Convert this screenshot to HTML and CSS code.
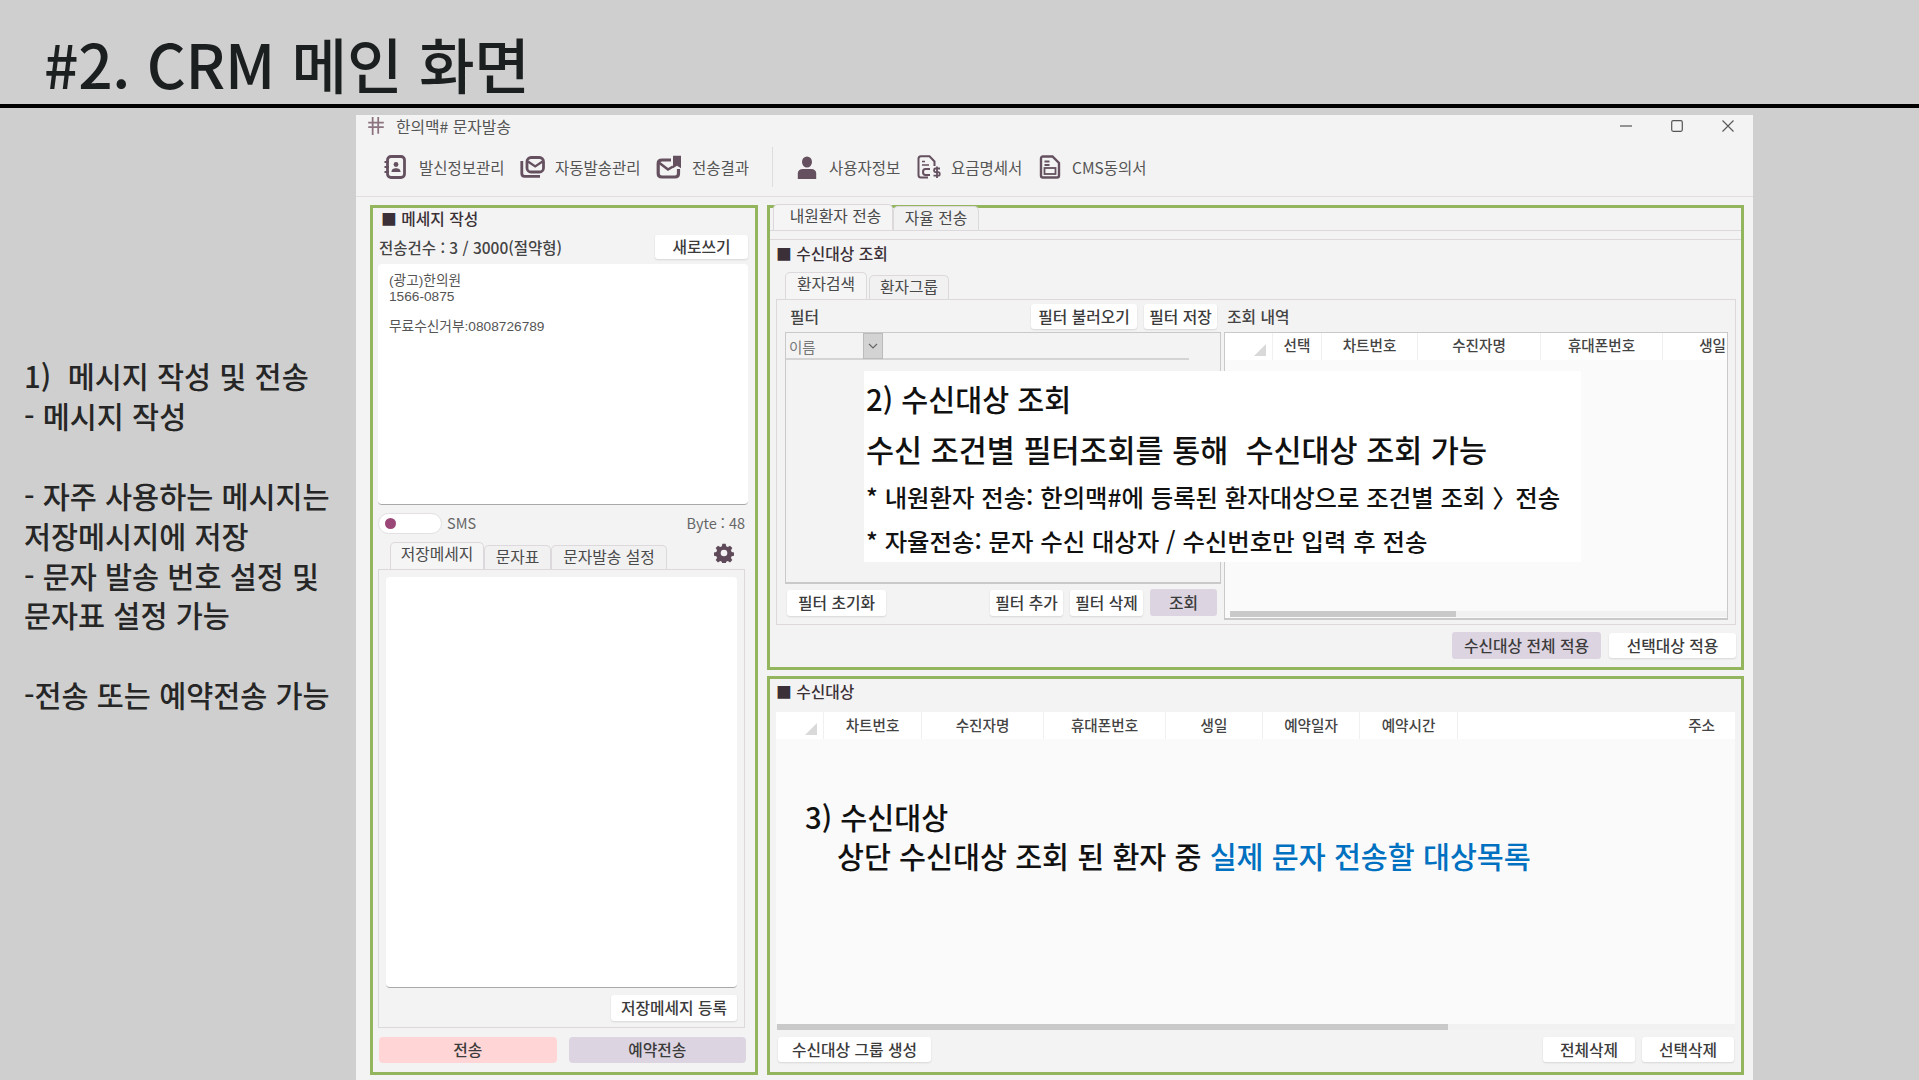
FILE: index.html
```html
<!DOCTYPE html>
<html lang="ko">
<head>
<meta charset="utf-8">
<title>CRM 메인 화면</title>
<link rel="stylesheet" href="styles.css">
</head>
<body>
<header class="slide-head"><h1>#2. CRM 메인 화면</h1></header>
<main class="slide-body">
  <aside class="notes">
    <p>1)&nbsp; 메시지 작성 및 전송</p>
    <p>- 메시지 작성</p>
    <p>&nbsp;</p>
    <p>- 자주 사용하는 메시지는</p>
    <p>저장메시지에 저장</p>
    <p>- 문자 발송 번호 설정 및</p>
    <p>문자표 설정 가능</p>
    <p>&nbsp;</p>
    <p>-전송 또는 예약전송 가능</p>
  </aside>
  <section class="window">
    <div class="titlebar">
      <svg class="app-icon" viewBox="0 0 16 18"><path d="M5 1v16M10 1v15M1 6h14M1 10h14" fill="none" stroke="#8b7480" stroke-width="1.6"/></svg>
      <span class="app-name">한의맥# 문자발송</span>
      <div class="win-controls">
        <svg viewBox="0 0 12 12"><path d="M0 6h12" stroke="#555" stroke-width="1.2"/></svg>
        <svg viewBox="0 0 12 12"><rect x=".7" y=".7" width="10.6" height="10.6" rx="1.5" fill="none" stroke="#555" stroke-width="1.2"/></svg>
        <svg viewBox="0 0 12 12"><path d="M.5.5l11 11M11.5.5l-11 11" stroke="#555" stroke-width="1.1"/></svg>
      </div>
    </div>
    <div class="toolbar">
      <div class="tool t1">
        <svg class="i22" viewBox="0 0 22 24"><rect x="3.500" y="1.500" width="17" height="21" rx="3.500" fill="none" stroke="#65505f" stroke-width="2.800"/><path d="M.5 7h4.500M.5 12h4.500M.5 17h4.500" stroke="#65505f" stroke-width="2"/><circle cx="12" cy="9.500" r="2.400" fill="#65505f"/><path d="M7.500 17c0-3 2-3.800 4.500-3.800s4.500.8 4.500 3.800z" fill="#65505f"/></svg>
        <span>발신정보관리</span>
      </div>
      <div class="tool t2">
        <svg class="i25" viewBox="0 0 25 22"><path d="M1.800 5v12.500c0 1.800 1 2.800 2.800 2.800H20" fill="none" stroke="#65505f" stroke-width="2.800"/><rect x="7" y="1.500" width="16.500" height="14.500" rx="4" fill="none" stroke="#65505f" stroke-width="2.800"/><path d="M8 5.500l7.200 5 7.300-5" fill="none" stroke="#65505f" stroke-width="2.200"/></svg>
        <span>자동발송관리</span>
      </div>
      <div class="tool t3">
        <svg class="i27" viewBox="0 0 27 24"><path d="M15 5H6C3.500 5 2.200 6.300 2.200 8.500v10c0 2.200 1.300 3.500 3.800 3.500h13c2.200 0 3.500-1.300 3.500-3.500V14" fill="none" stroke="#65505f" stroke-width="3.200"/><path d="M3.500 8l8.500 6.500 5-3" fill="none" stroke="#65505f" stroke-width="2.600"/><path d="M17 .8h8v12.500l-4-2.500-4 2.500z" fill="#65505f"/></svg>
        <span>전송결과</span>
      </div>
      <i class="tool-sep"></i>
      <div class="tool t4">
        <svg class="i20" viewBox="0 0 20 23"><ellipse cx="10" cy="6" rx="5" ry="5.500" fill="#65505f"/><path d="M.8 23v-5.500c0-3 2-4.500 5-4.500h8.400c3 0 5 1.500 5 4.500V23z" fill="#65505f"/></svg>
        <span>사용자정보</span>
      </div>
      <div class="tool t5">
        <svg class="i26" viewBox="0 0 26 24"><path d="M17.500 11V6.500L12.500 1.200H4C2.500 1.200 1.500 2.200 1.500 3.700V20c0 1.500 1 2.500 2.500 2.500h7" fill="none" stroke="#65505f" stroke-width="2"/><path d="M5 6.500h3M5 10h7" stroke="#65505f" stroke-width="1.700"/><path d="M13 14H8.500C6.800 14 6 15 6 17s.8 3 2.500 3H13" fill="none" stroke="#65505f" stroke-width="2"/><path d="M23 13.500h-4.500c-1.900 0-1.900 3.600 0 3.600h2.800c1.900 0 1.900 3.600 0 3.600h-4.800M20 11.500v11.500" fill="none" stroke="#65505f" stroke-width="1.800"/></svg>
        <span>요금명세서</span>
      </div>
      <div class="tool t6">
        <svg class="i22" viewBox="0 0 22 24"><path d="M13.500 1.500H4C2.700 1.500 2 2.200 2 3.500v17C2 21.800 2.700 22.500 4 22.500h14c1.300 0 2-.7 2-2V8z" fill="none" stroke="#65505f" stroke-width="2.400"/><path d="M5.500 6.500h5M5.500 10h5" stroke="#65505f" stroke-width="1.800"/><rect x="5.500" y="13" width="11" height="6" fill="none" stroke="#65505f" stroke-width="1.800"/></svg>
        <span>CMS동의서</span>
      </div>
    </div>
    <div class="workspace">
      <section class="panel compose">
        <h2 class="sec-title compose-title">■ 메세지 작성</h2>
        <div class="count-row"><strong>전송건수 : 3 / 3000(절약형)</strong><button class="btn new-btn">새로쓰기</button></div>
        <div class="msg-area"><p>(광고)한의원</p><p>1566-0875</p><p class="blank"></p><p>무료수신거부:0808726789</p></div>
        <div class="status-row"><span class="toggle"><i></i></span><span class="sms">SMS</span><span class="bytes">Byte : 48</span></div>
        <div class="tabs msg-tabs">
          <span class="tab active t-save">저장메세지</span><span class="tab t-table">문자표</span><span class="tab t-set">문자발송 설정</span>
          <svg class="gear" viewBox="0 0 24 24"><path fill="#5f4a59" fill-rule="evenodd" d="M10 1h4l.6 3 2 .9 2.600-1.600 2.800 2.800-1.700 2.500.9 2.100 3 .6v4l-3 .6-.9 2 1.700 2.600-2.800 2.800-2.600-1.700-2 .9-.6 3h-4l-.6-3-2-.9-2.600 1.700-2.800-2.800 1.700-2.600-.9-2-3-.6v-4l3-.6.9-2.100-1.700-2.500 2.800-2.800 2.600 1.600 2-.9zM12 8a4 4 0 1 0 0 8 4 4 0 0 0 0-8z"/></svg>
        </div>
        <div class="msg-pane">
          <div class="saved-list"></div>
          <div class="saved-actions"><button class="btn save-btn">저장메세지 등록</button></div>
        </div>
        <div class="send-row"><button class="btn wide pink">전송</button><button class="btn wide purple">예약전송</button></div>
      </section>
      <div class="right-col">
        <section class="panel lookup">
          <div class="tabs main-tabs"><span class="tab active m1">내원환자 전송</span><span class="tab m2">자율 전송</span></div>
          <div class="lookup-body">
            <h2 class="sec-title">■ 수신대상 조회</h2>
            <div class="tabs sub-tabs"><span class="tab active s1">환자검색</span><span class="tab s2">환자그룹</span></div>
            <div class="search-pane">
              <div class="filter-col">
                <div class="filter-head"><span class="label">필터</span><button class="btn f-load">필터 불러오기</button><button class="btn f-save">필터 저장</button></div>
                <div class="filter-box">
                  <div class="filter-select"><span class="sel-text">이름</span><span class="sel-btn"><svg viewBox="0 0 10 6"><path d="M1 1l4 4 4-4" fill="none" stroke="#666" stroke-width="1.200"/></svg></span></div>
                </div>
                <div class="filter-actions"><button class="btn f-reset">필터 초기화</button><span class="grow"></span><button class="btn f-add">필터 추가</button><button class="btn f-add">필터 삭제</button><button class="btn f-go purple">조회</button></div>
              </div>
              <div class="result-col">
                <div class="label result-label">조회 내역</div>
                <div class="result-box">
                  <div class="grid-head result-grid"><span class="corner"><i></i></span><span>선택</span><span>차트번호</span><span>수진자명</span><span>휴대폰번호</span><span class="clip">생일</span></div>
                  <div class="grid-body"></div>
                  <div class="hscroll r-scroll"><i></i></div>
                </div>
              </div>
            </div>
            <div class="apply-row"><button class="btn purple apply-all">수신대상 전체 적용</button><button class="btn apply-sel">선택대상 적용</button></div>
          </div>
          <div class="callout-white">
            <p class="c-big">2) 수신대상 조회</p>
            <p class="c-big c-wide">수신 조건별 필터조회를 통해&nbsp; 수신대상 조회 가능</p>
            <p class="c-small">* 내원환자 전송: 한의맥#에 등록된 환자대상으로 조건별 조회 <span class="chev">〉</span>전송</p>
            <p class="c-small">* 자율전송: 문자 수신 대상자 / 수신번호만 입력 후 전송</p>
          </div>
        </section>
        <section class="panel targets">
          <h2 class="sec-title">■ 수신대상</h2>
          <div class="grid-head target-grid"><span class="corner"><i></i></span><span>차트번호</span><span>수진자명</span><span>휴대폰번호</span><span>생일</span><span>예약일자</span><span>예약시간</span><span class="addr">주소</span></div>
          <div class="grid-body target-body">
            <div class="callout-plain">
              <p>3) 수신대상</p>
              <p class="indent">상단 수신대상 조회 된 환자 중 <b>실제 문자 전송할 대상목록</b></p>
            </div>
          </div>
          <div class="hscroll t-scroll"><i></i></div>
          <div class="target-actions"><button class="btn t-group">수신대상 그룹 생성</button><span class="grow"></span><button class="btn t-del">전체삭제</button><button class="btn t-del">선택삭제</button></div>
        </section>
      </div>
    </div>
  </section>
</main>
</body>
</html>
```
FILE: styles.css
```css
* { box-sizing: border-box; }
html, body { margin: 0; padding: 0; }
body {
  width: 1919px; height: 1080px; overflow: hidden;
  background: #cfcfcf; color: #3f3f3f;
  font-family: "Noto Sans CJK KR", "Noto Sans", sans-serif;
}
p, h1, h2 { margin: 0; font-weight: inherit; }
button { font-family: inherit; }

.slide-head { height: 108px; border-bottom: 4px solid #000; padding: 28px 0 0 44px; }
.slide-head h1 { font-size: 60.500px; line-height: 70px; font-weight: 500; color: #1c1f20; letter-spacing: -.3px; white-space: nowrap; }

.slide-body { display: flex; height: 972px; }
.notes { width: 356px; padding: 248px 0 0 24px; font-size: 29.400px; line-height: 39.900px; font-weight: 500; color: #262626; white-space: nowrap; }

.window { width: 1397px; height: 965px; margin-top: 7px; background: #f3f3f3; display: flex; flex-direction: column; }
.titlebar { height: 23px; display: flex; align-items: center; padding: 0 0 1px 11px; flex: none; }
.app-icon { width: 18px; height: 20px; }
.app-name { margin-left: 11px; font-size: 15.800px; color: #555; }
.win-controls { margin-left: auto; display: flex; gap: 39px; padding-right: 19px; }
.win-controls svg { width: 12px; height: 12px; display: block; }

.toolbar { height: 59px; flex: none; display: flex; align-items: center; border-bottom: 1px solid #e3dde2; }
.tool { display: flex; align-items: center; font-size: 15.500px; color: #555; white-space: nowrap; }
.tool span { margin-left: 11px; }
.tool svg { flex: none; display: block; }
.i22 { width: 22px; height: 24px; }
.i25 { width: 25px; height: 22px; }
.i27 { width: 27px; height: 24px; }
.i20 { width: 20px; height: 23px; }
.i26 { width: 26px; height: 24px; }
.t1 { margin-left: 28px; width: 136px; }
.t1 span { margin-left: 13px; }
.t2 { width: 136px; }
.t2 span { margin-left: 10px; }
.t3 { width: 116px; }
.t3 span { margin-left: 9px; }
.tool-sep { width: 1px; height: 40px; background: #ddd; flex: none; }
.t4 { margin-left: 24px; width: 120px; }
.t4 span { margin-left: 12px; }
.t5 { width: 122px; }
.t5 span { margin-left: 8px; }
.t6 { width: 120px; }

.workspace { flex: 1; min-height: 0; display: flex; gap: 9px; padding: 8px 9px 5px 14px; }
.panel { border: 3px solid #93b55e; background: #f3f3f3; }
.compose { width: 388px; padding: 0 7px 0 5px; display: flex; flex-direction: column; }
.right-col { flex: 1; display: flex; flex-direction: column; gap: 6px; min-width: 0; }
.lookup { height: 465px; position: relative; flex: none; }
.targets { flex: 1; min-height: 0; padding: 0 6px 10px 6px; display: flex; flex-direction: column; }

.sec-title { font-size: 15.800px; line-height: 22px; color: #3b3038; font-weight: 500; white-space: nowrap; }
.compose-title { padding-left: 3px; }
.count-row { display: flex; justify-content: space-between; align-items: center; margin-top: 5px; height: 24px; font-size: 15.500px; padding-left: 1px; }
.count-row strong { font-weight: 500; color: #444; }

.btn { border: 0; background: #fff; border-radius: 3px; box-shadow: 0 1px 2px rgba(0,0,0,.12); font-size: 15.800px; font-weight: 500; color: #3b3b3b; padding: 0; height: 25px; white-space: nowrap; line-height: 1; }
.btn.purple { background: #dcd4e0; }
.btn.pink { background: #ffd5d5; }
.new-btn { width: 93px; height: 24px; }

.msg-area { height: 241px; margin-top: 5px; background: #fff; border-radius: 4px; border-bottom: 1px solid #a9a9a9; padding: 9px 11px; font-family: "Liberation Sans", "Noto Sans CJK KR", sans-serif; font-size: 13.700px; line-height: 16px; color: #555; flex: none; }
.msg-area .blank { height: 14px; }
.status-row { margin-top: 8px; height: 21px; display: flex; align-items: center; font-size: 14.500px; color: #666; margin-right: 3px; flex: none; }
.status-row span:not(.toggle) { position: relative; top: -1px; }
.toggle { width: 64px; height: 21px; border-radius: 11px; background: #fff; border: 1px solid #e3dfe2; display: flex; align-items: center; padding-left: 6px; }
.toggle i { width: 11px; height: 11px; border-radius: 50%; background: #9a4677; }
.sms { margin-left: 5px; }
.bytes { margin-left: auto; }

.tabs { display: flex; align-items: flex-end; flex: none; }
.tab { display: flex; align-items: center; justify-content: center; background: #f1f1f1; border: 1px solid #dcd8dc; border-bottom: 0; border-radius: 5px 5px 0 0; font-size: 15.800px; line-height: 20px; color: #4a4a4a; white-space: nowrap; padding-bottom: 2px; }
.tab.active { background: #f5f5f5; padding-bottom: 5px; }
.msg-tabs { margin-top: 8px; height: 27px; padding-left: 12px; position: relative; }
.t-save { width: 94px; height: 27px; }
.t-table { width: 67px; height: 24px; }
.t-set { width: 116px; height: 24px; }
.gear { width: 20px; height: 20px; margin: 0 0 6px 47px; align-self: flex-end; }

.msg-pane { width: 367px; height: 459px; border: 1px solid #dcd8dc; padding: 7px 7px 0; flex: none; }
.saved-list { height: 411px; background: #fff; border-radius: 4px; border-bottom: 1px solid #a9a9a9; }
.saved-actions { display: flex; justify-content: flex-end; margin-top: 7px; }
.save-btn { width: 126px; height: 26px; }
.send-row { display: flex; gap: 12px; margin: 9px 2px 0 1px; flex: none; }
.wide { flex: 1; height: 26px; border-radius: 4px; box-shadow: none; }

.main-tabs { height: 23px; padding-left: 3px; border-bottom: 1px solid #dcd8dc; }
.tab.m1 { width: 120px; height: 26px; margin-top: -3px; padding: 0 0 3px 5px; }
.m2 { width: 86px; height: 24px; }
.lookup-body { margin-top: 8px; border-top: 1px solid #dcd8dc; padding: 3px 5px 0 6px; }
.lookup-body .sec-title { padding-left: 0; }
.sub-tabs { margin-top: 7px; padding-left: 9px; height: 27px; gap: 2px; }
.s1 { width: 82px; height: 27px; }
.s2 { width: 80px; height: 24px; }

.search-pane { height: 326px; border: 1px solid #dcd8dc; display: flex; padding: 0 7px 0 8px; }
.filter-col { width: 436px; display: flex; flex-direction: column; flex: none; }
.filter-head { height: 32px; display: flex; align-items: center; padding-top: 1px; }
.label { font-size: 15.800px; font-weight: 500; color: #444; white-space: nowrap; }
.filter-head .label { margin: 0 auto 0 5px; }
.f-load { width: 106px; }
.f-save { width: 73px; margin: 0 4px 0 7px; }
.filter-box { height: 252px; border: 1px solid #c9c9c9; border-bottom-width: 2px; flex: none; }
.filter-select { display: flex; height: 27px; width: 403px; border-bottom: 2px solid #d4d4d4; font-size: 14.500px; color: #777; }
.sel-text { width: 77px; padding-left: 3px; line-height: 27px; }
.sel-btn { width: 20px; height: 26px; background: #d3d3d3; border: 1px solid #bbb; display: flex; align-items: center; justify-content: center; }
.sel-btn svg { width: 10px; height: 6px; }
.filter-actions { display: flex; align-items: flex-start; padding: 6px 4px 0 2px; }
.grow { flex: 1; }
.f-reset { width: 99px; height: 26px; }
.f-add { width: 73px; height: 26px; margin-right: 7px; }
.f-go { width: 67px; height: 27px; margin-top: -1px; box-shadow: none; }

.result-col { flex: 1; min-width: 0; padding-left: 3px; }
.result-label { height: 32px; line-height: 33px; padding-left: 3px; }
.result-box { height: 288px; border: 1px solid #c9c9c9; border-bottom-width: 2px; background: #fafafa; display: flex; flex-direction: column; }
.grid-head { display: grid; height: 27px; background: #fff; font-size: 14.600px; color: #444; font-weight: 500; flex: none; }
.grid-head span { display: flex; align-items: center; justify-content: center; border-right: 1px solid #f0f0f0; white-space: nowrap; overflow: hidden; padding-bottom: 5px; }
.result-grid { grid-template-columns: 48px 49px 96px 123px 122px 1fr; }
.result-grid .clip { justify-content: flex-end; border-right: 0; padding-right: 1px; }
.grid-head .corner { position: relative; padding: 0; }
.corner i { position: absolute; right: 6px; bottom: 4px; width: 0; height: 0; border-left: 12px solid transparent; border-bottom: 12px solid #d9d9d9; }
.grid-body { flex: 1; background: #fafafa; min-height: 0; }
.hscroll { height: 6px; flex: none; background: #f1f1f1; }
.hscroll i { display: block; height: 100%; background: #c9c9c9; }
.r-scroll { margin: 0 0 1px 5px; }
.r-scroll i { width: 226px; }

.apply-row { display: flex; justify-content: flex-end; gap: 8px; margin-top: 7px; }
.apply-all { width: 149px; height: 27px; box-shadow: none; }
.apply-sel { width: 127px; height: 25px; margin-top: 1px; }

.callout-white { position: absolute; left: 94px; top: 163px; width: 717px; height: 191px; background: #fff; padding: 6px 0 0 2px; color: #111; white-space: nowrap; }
.c-big { font-size: 29.300px; line-height: 43px; margin-bottom: 8px; font-weight: 500; }
.c-wide { font-size: 30.500px; }
.c-small { font-size: 24.400px; line-height: 36px; margin-bottom: 8px; font-weight: 500; }
.chev { letter-spacing: -.05em; }

.target-grid { grid-template-columns: 48px 98px 122px 122px 97px 97px 98px 1fr; margin-top: 9px; }
.target-grid span { padding-bottom: 3px; }
.targets .sec-title { margin-top: 2px; padding-left: 0; margin-bottom: 0; }
.target-grid .addr { justify-content: flex-end; padding-right: 20px; border-right: 0; }
.target-body { position: relative; }
.callout-plain { position: absolute; left: 29px; top: 58px; font-size: 29.300px; line-height: 39px; font-weight: 500; color: #111; white-space: nowrap; }
.callout-plain .indent { padding-left: 32px; }
.callout-plain b { color: #0070c0; font-weight: 500; }
.t-scroll { margin-left: 1px; }
.t-scroll i { width: 671px; }
.target-actions { display: flex; margin: 7px 1px 0 2px; gap: 7px; flex: none; }
.t-group { width: 153px; }
.t-del { width: 92px; }
```
